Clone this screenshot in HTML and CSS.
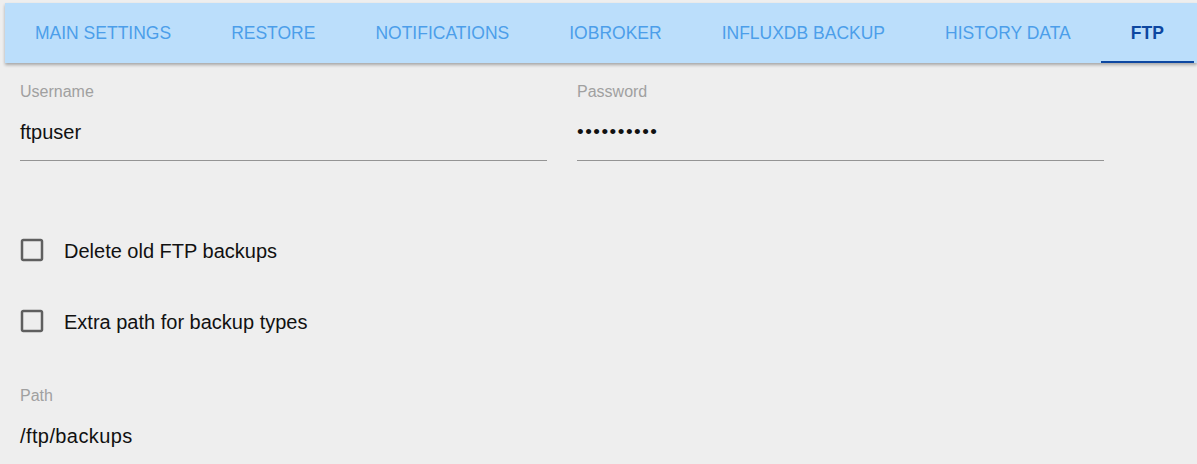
FILE: index.html
```html
<!DOCTYPE html>
<html>
<head>
<meta charset="utf-8">
<link rel="stylesheet" href="styles.css">
</head>
<body>
<div class="tabbar">
  <div class="tab">MAIN SETTINGS</div>
  <div class="tab">RESTORE</div>
  <div class="tab">NOTIFICATIONS</div>
  <div class="tab">IOBROKER</div>
  <div class="tab">INFLUXDB BACKUP</div>
  <div class="tab">HISTORY DATA</div>
  <div class="tab active">FTP</div>
</div>
<div class="content">
  <div class="row">
    <div class="field">
      <div class="label">Username</div>
      <div class="value">ftpuser</div>
    </div>
    <div class="field">
      <div class="label">Password</div>
      <div class="value dots">••••••••••</div>
    </div>
  </div>
  <div class="checks">
    <div class="check">
      <svg class="box" viewBox="0 0 24 24" width="30" height="30"><path d="M19 5v14H5V5h14m0-2H5c-1.11 0-2 .9-2 2v14c0 1.1.89 2 2 2h14c1.1 0 2-.9 2-2V5c0-1.1-.9-2-2-2z"/></svg>
      <span class="check-label">Delete old FTP backups</span>
    </div>
    <div class="check">
      <svg class="box" viewBox="0 0 24 24" width="30" height="30"><path d="M19 5v14H5V5h14m0-2H5c-1.11 0-2 .9-2 2v14c0 1.1.89 2 2 2h14c1.1 0 2-.9 2-2V5c0-1.1-.9-2-2-2z"/></svg>
      <span class="check-label">Extra path for backup types</span>
    </div>
  </div>
  <div class="field path">
    <div class="label">Path</div>
    <div class="value noline pathval">/ftp/backups</div>
  </div>
</div>
</body>
</html>
```

FILE: styles.css
```css
html, body {
  margin: 0;
  padding: 0;
  background: #eeeeee;
  font-family: "Liberation Sans", Arial, sans-serif;
  overflow: hidden;
}
.tabbar {
  margin: 3px 0 0 5px;
  height: 60px;
  background: #bbdefb;
  display: flex;
  box-shadow: 0 2px 3px rgba(0, 0, 0, 0.3);
  overflow: hidden;
}
.tab {
  flex: none;
  display: flex;
  align-items: center;
  justify-content: center;
  padding: 2px 30px 0;
  font-size: 17.5px;
  color: #4c9eea;
  white-space: nowrap;
  box-sizing: border-box;
  border-bottom: 2px solid transparent;
}
.tab.active {
  min-width: 93px;
  color: #0d47a1;
  font-weight: bold;
  border-bottom-color: #0d47a1;
}
.content {
  padding: 1px 20px 0;
}
.row {
  display: grid;
  grid-template-columns: 527px 527px;
  column-gap: 30px;
}
.field {
  padding-top: 18px;
}
.label {
  font-size: 16px;
  line-height: 20px;
  color: #a0a0a0;
}
.value {
  margin-top: 18px;
  font-size: 20px;
  line-height: 24px;
  color: #111;
  padding-bottom: 16px;
  border-bottom: 1px solid #949494;
}
.value.noline {
  border-bottom: none;
}
.dots {
  font-size: 19px;
  letter-spacing: 1.5px;
}
.pathval {
  letter-spacing: 0.4px;
}
.checks {
  margin-top: 65px;
  display: flex;
  flex-direction: column;
  gap: 23px;
}
.check {
  height: 48px;
  display: flex;
  align-items: center;
  margin-left: -3px;
}
.box {
  fill: #5f5f5f;
  flex: none;
}
.check-label {
  margin-left: 17px;
  padding-top: 3px;
  font-size: 20px;
  color: #111;
}
.field.path {
  padding-top: 41px;
}
```
